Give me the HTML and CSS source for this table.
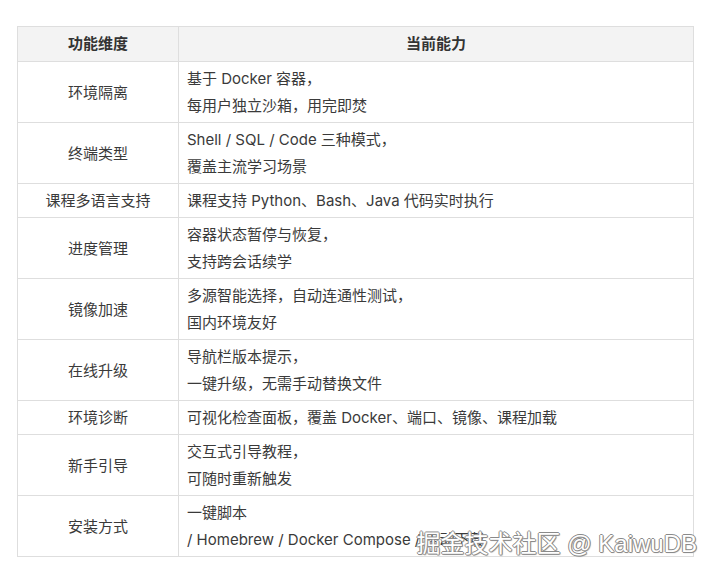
FILE: index.html
```html
<!DOCTYPE html>
<html lang="zh">
<head>
<meta charset="utf-8">
<title>功能维度</title>
<link rel="stylesheet" href="styles.css">
</head>
<body>
<div class="page">
  <table class="feat">
    <thead>
      <tr><th class="c1">功能维度</th><th>当前能力</th></tr>
    </thead>
    <tbody>
      <tr><td class="c1">环境隔离</td><td>基于 Docker 容器，<br>每用户独立沙箱，用完即焚</td></tr>
      <tr><td class="c1">终端类型</td><td>Shell / SQL / Code 三种模式，<br>覆盖主流学习场景</td></tr>
      <tr><td class="c1">课程多语言支持</td><td>课程支持 Python、Bash、Java 代码实时执行</td></tr>
      <tr><td class="c1">进度管理</td><td>容器状态暂停与恢复，<br>支持跨会话续学</td></tr>
      <tr><td class="c1">镜像加速</td><td>多源智能选择，自动连通性测试，<br>国内环境友好</td></tr>
      <tr><td class="c1">在线升级</td><td>导航栏版本提示，<br>一键升级，无需手动替换文件</td></tr>
      <tr><td class="c1">环境诊断</td><td>可视化检查面板，覆盖 Docker、端口、镜像、课程加载</td></tr>
      <tr><td class="c1">新手引导</td><td>交互式引导教程，<br>可随时重新触发</td></tr>
      <tr><td class="c1">安装方式</td><td>一键脚本<br>/ Homebrew / Docker Compose / 手动下载</td></tr>
    </tbody>
  </table>
  <div class="mark">掘金技术社区 @ KaiwuDB</div>
</div>
</body>
</html>
```
FILE: styles.css
```css
html, body {
  margin: 0;
  padding: 0;
  background: #ffffff;
}
.page {
  position: relative;
  width: 715px;
  height: 580px;
  padding: 26px 0 0 17px;
  box-sizing: border-box;
  font-family: Inter, "Noto Sans CJK SC", sans-serif;
  color: #3a3a3a;
}
.feat {
  border-collapse: collapse;
  width: 677px;
  font-size: 15px;
  table-layout: fixed;
}
.feat th, .feat td {
  border: 1px solid #dedede;
  padding: 3px 8px;
  line-height: 27px;
  text-align: left;
  vertical-align: middle;
}
.feat th {
  background: #f3f3f3;
  font-weight: bold;
  text-align: center;
  padding: 4px 8px;
  line-height: 26px;
  color: #333333;
}
.feat .c1 {
  width: 144px;
  text-align: center;
}
.mark {
  position: absolute;
  right: 18px;
  top: 529px;
  font-family: "Liberation Sans", "Noto Sans CJK SC", sans-serif;
  font-size: 24px;
  line-height: 30px;
  color: #ffffff;
  white-space: nowrap;
  text-shadow: 1px 0 0 #8a8a8a, -1px 0 0 #8a8a8a, 0 1px 0 #8a8a8a, 0 -1px 0 #8a8a8a, 1px 1px 1px #9a9a9a;
}
```
